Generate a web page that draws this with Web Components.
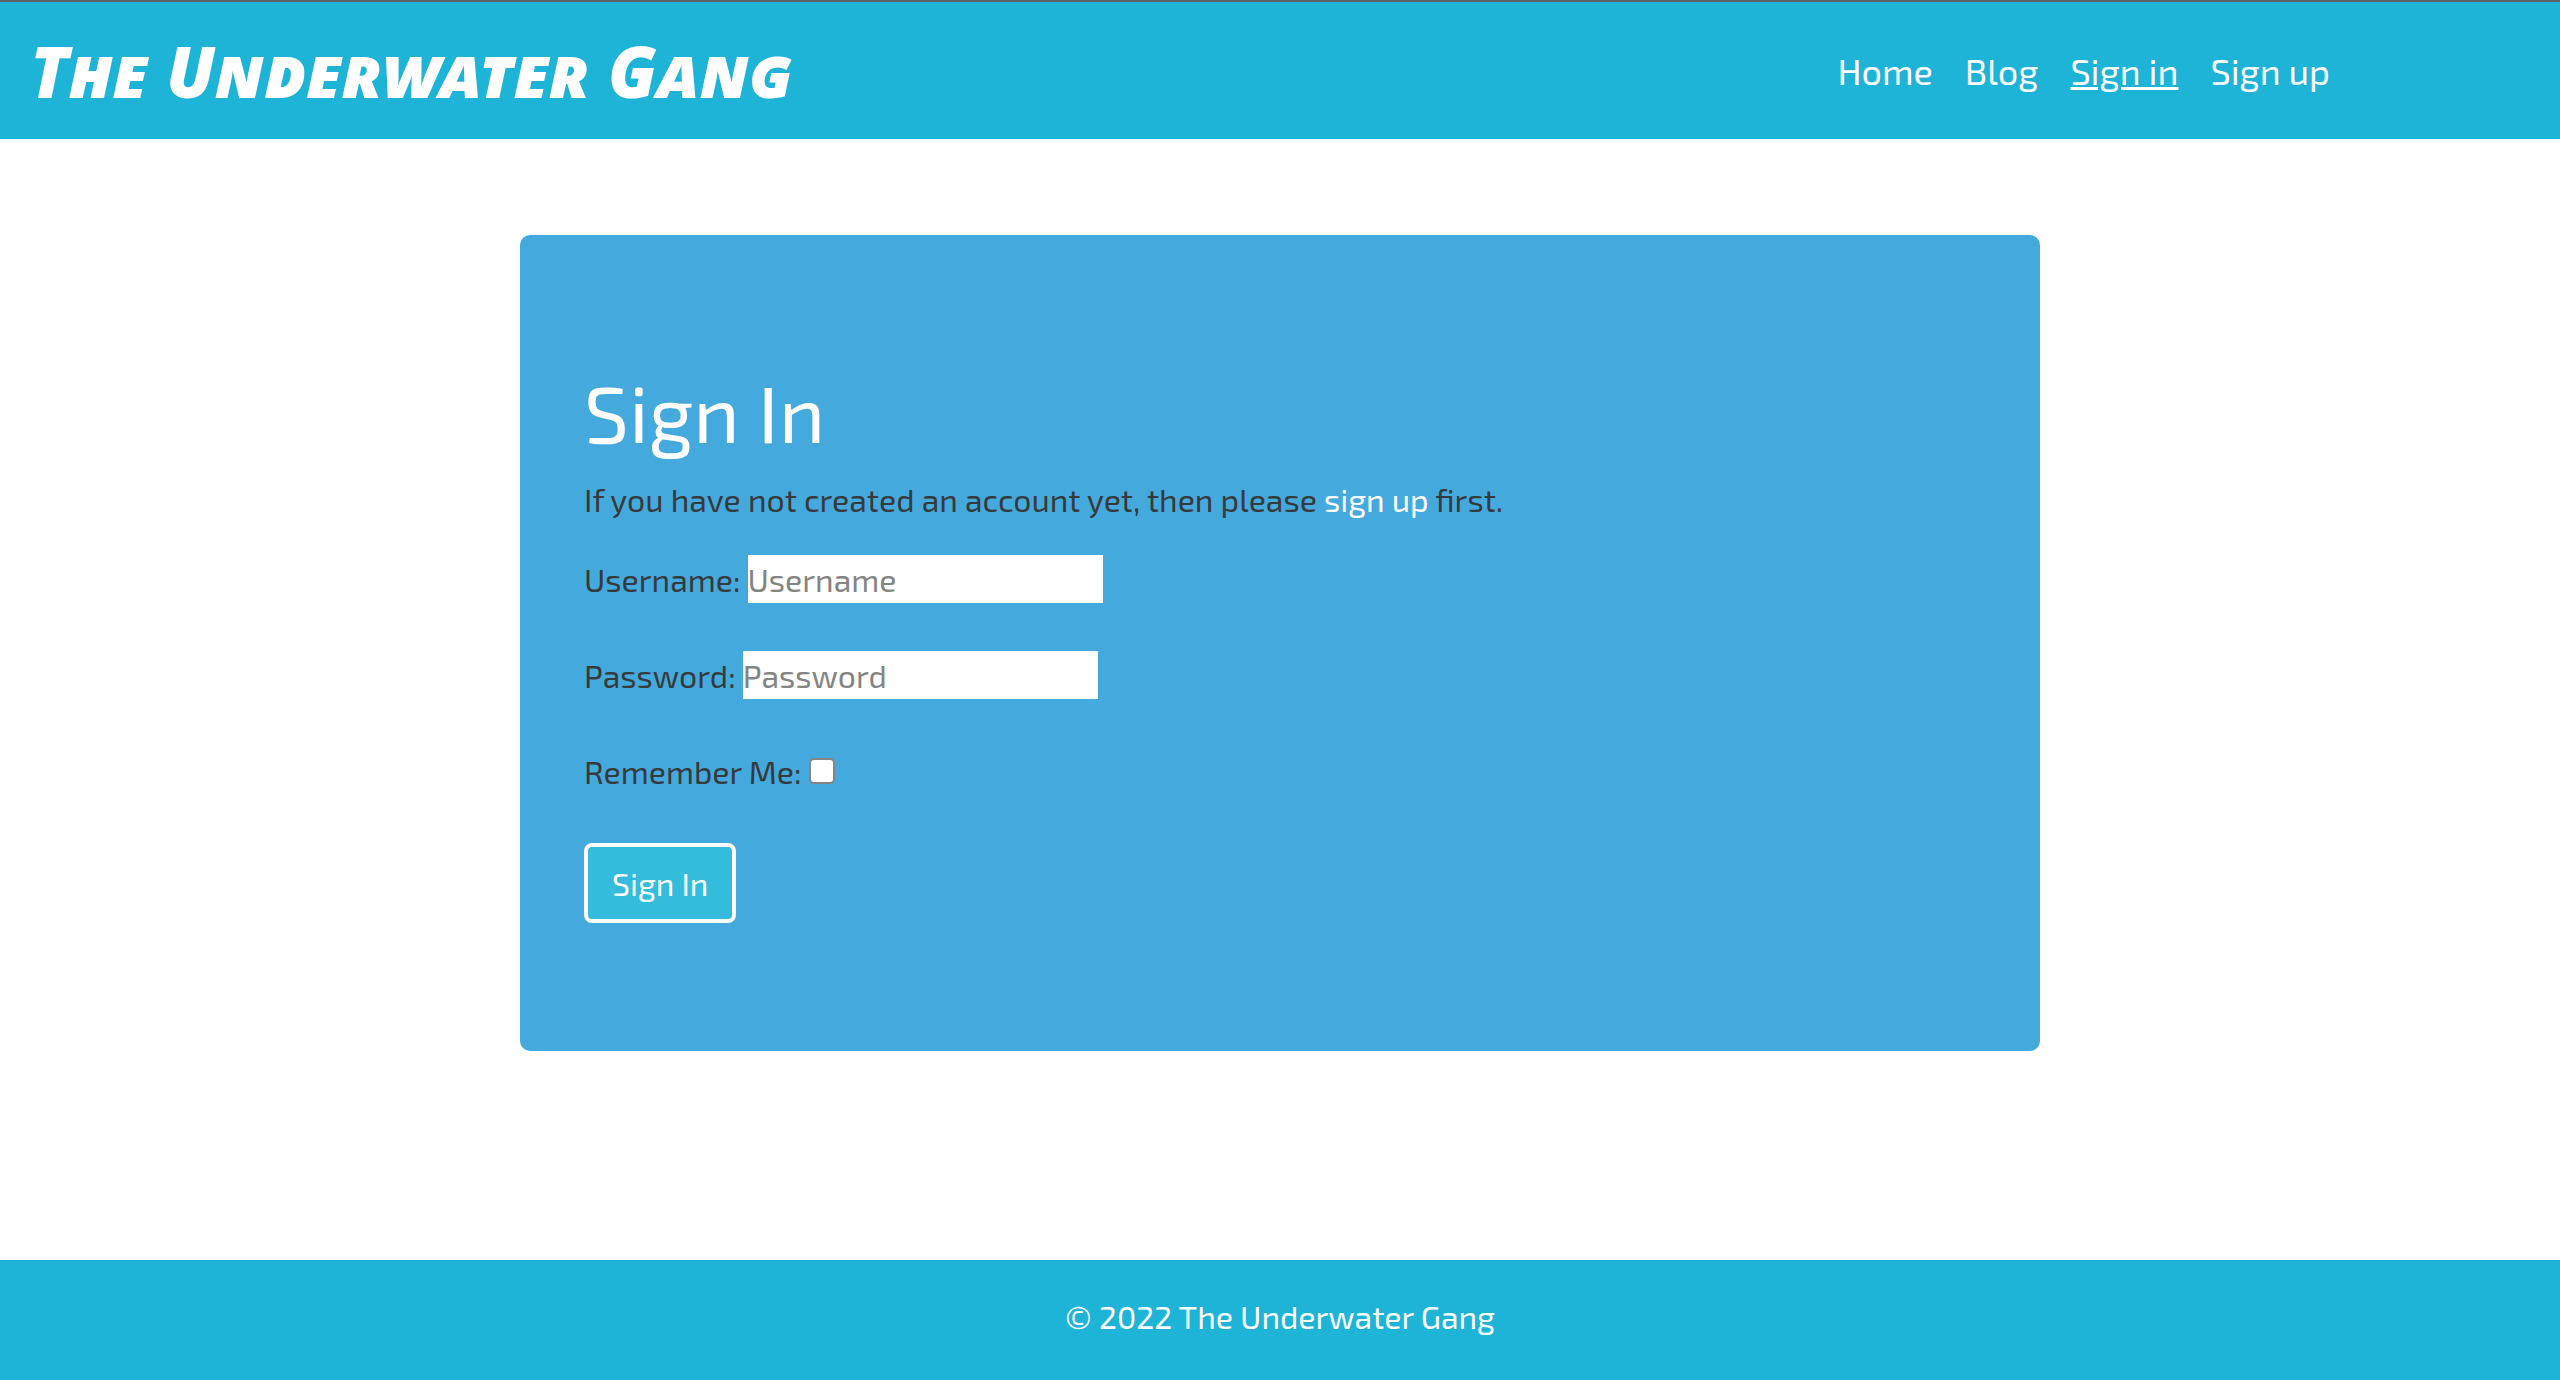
<!DOCTYPE html>
<html lang="en">
<head>
<meta charset="utf-8">
<meta name="viewport" content="width=device-width, initial-scale=1">
<title>The Underwater Gang</title>
<style>
  body { margin: 0; background: #fff; color: #373a3c; font: 32px/48px "Exo 2", Roboto, sans-serif; }
</style>
</head>
<body>
<gang-page>
  <site-header slot="header" brand="The Underwater Gang">
    <nav-link href="#home">Home</nav-link>
    <nav-link href="#blog">Blog</nav-link>
    <nav-link href="#signin" active>Sign in</nav-link>
    <nav-link href="#signup">Sign up</nav-link>
  </site-header>
  <sign-in-card></sign-in-card>
  <site-footer slot="footer">© 2022 The Underwater Gang</site-footer>
</gang-page>
<script>
class GangElement extends HTMLElement {
  connectedCallback() {
    if (!this.shadowRoot) this.attachShadow({ mode: 'open' }).innerHTML = this.render();
  }
}

customElements.define('gang-page', class extends GangElement {
  render() {
    return `<style>
      :host { display: flex; flex-direction: column; min-height: 100vh; }
      main { flex: 1; padding: 96px 32px; }
    </style>
    <slot name="header"></slot><main><slot></slot></main><slot name="footer"></slot>`;
  }
});

customElements.define('site-header', class extends GangElement {
  render() {
    return `<style>
      :host { display: block; border-top: 2px solid #5f6368; background: #1eb4d7; color: #fff; }
      header { display: flex; flex-wrap: wrap; align-items: center; justify-content: space-between;
        padding: 21px 230px 20px 30px; }
      a { color: inherit; text-decoration: none; white-space: nowrap;
        font: italic small-caps 900 70px/96px "Permanent Marker", "Noto Sans", sans-serif; }
      nav { display: flex; gap: 32px; font-size: 36px; }
    </style>
    <header><a href="#home">${this.getAttribute('brand')}</a><nav><slot></slot></nav></header>`;
  }
});

customElements.define('nav-link', class extends GangElement {
  render() {
    return `<style>
      :host { display: block; }
      a { color: inherit; text-decoration: none; }
      :host([active]) a { text-decoration: underline; text-decoration-thickness: 3px; }
    </style>
    <a href="${this.getAttribute('href')}"><slot></slot></a>`;
  }
});

customElements.define('form-field', class extends GangElement {
  render() {
    const type = this.getAttribute('type') || 'text';
    const hint = this.getAttribute('placeholder') || '';
    return `<style>
      :host { display: flex; align-items: center; gap: 7px; }
      input { box-sizing: border-box; margin: 0; padding: 0; border: 0; border-radius: 0;
        width: 355px; height: 48px; background: #fff; color: #373a3c; font: inherit; }
      input::placeholder { color: #848484; opacity: 1; }
      input[type=checkbox] { appearance: none; width: 26px; height: 26px;
        border: 2px solid #858585; border-radius: 5px; }
      input[type=checkbox]:checked { background: #0075ff; }
    </style>
    <label for="control">${this.getAttribute('label')}</label>
    <input id="control" type="${type}" placeholder="${hint}">`;
  }
});

customElements.define('sign-in-card', class extends GangElement {
  render() {
    return `<style>
      :host { display: block; box-sizing: border-box; max-width: 1520px; margin: 0 auto;
        padding: 128px 64px; border-radius: 10px; background: #44aade; }
      h1 { margin: 0 0 16px; color: #fff; font-size: 80px; line-height: 96px; font-weight: 400; }
      p { margin: 0 0 32px; }
      p a { color: #fff; text-decoration: none; }
      form { display: flex; flex-direction: column; align-items: flex-start; gap: 48px; }
      button { padding: 12px 24px; border: 4px solid #fff; border-radius: 8px;
        background: #33bcdb; color: #fff; font: inherit; }
    </style>
    <h1>Sign In</h1>
    <p>If you have not created an account yet, then please <a href="#signup">sign up</a> first.</p>
    <form>
      <form-field label="Username:" placeholder="Username"></form-field>
      <form-field label="Password:" type="password" placeholder="Password"></form-field>
      <form-field label="Remember Me:" type="checkbox"></form-field>
      <button type="submit">Sign In</button>
    </form>`;
  }
});

customElements.define('site-footer', class extends GangElement {
  render() {
    return `<style>
      :host { display: block; background: #1eb4d7; color: #fff; }
      footer { padding: 32px 32px 40px; text-align: center; }
    </style>
    <footer><slot></slot></footer>`;
  }
});
</script>
</body>
</html>
